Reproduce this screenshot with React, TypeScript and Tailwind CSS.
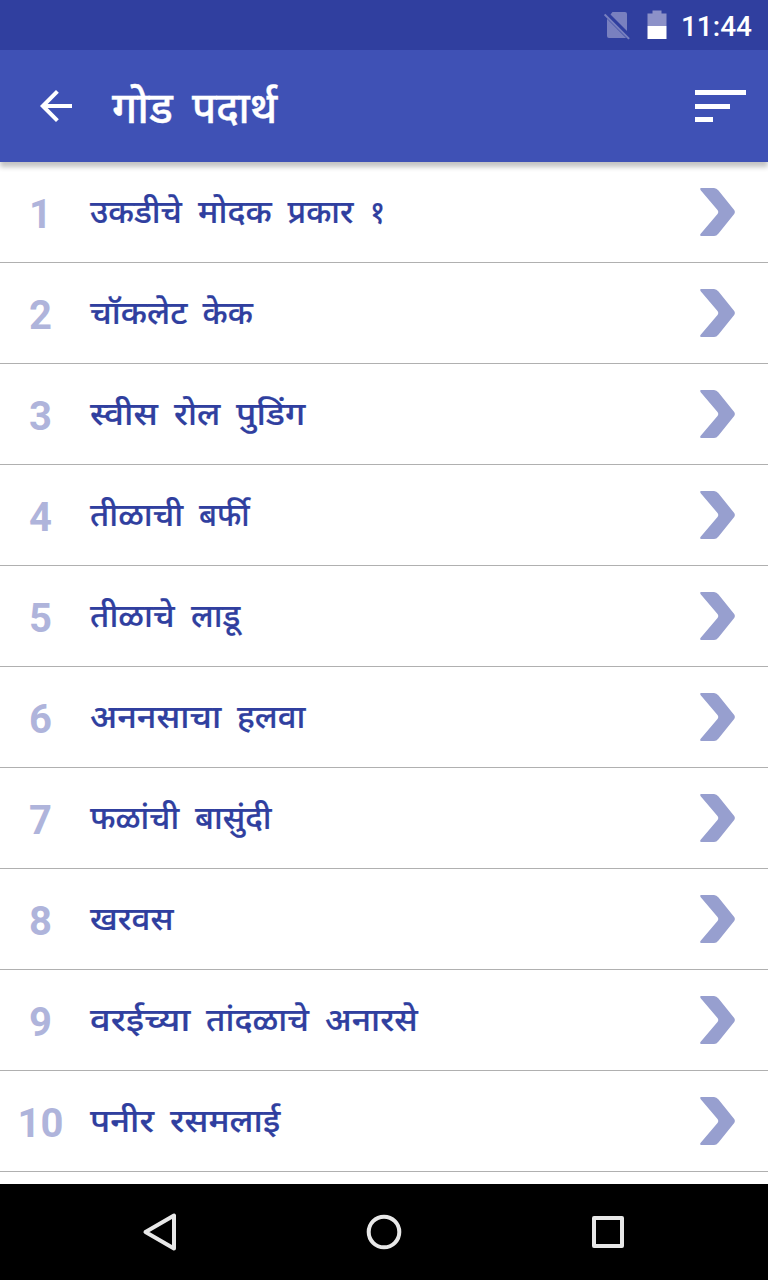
import { useLayoutEffect, useRef } from "react";

type WordData = [text: string, width: number];

const title: WordData[] = [["गोड", 61], ["पदार्थ", 85]];

const recipes: WordData[][] = [
  [["उकडीचे", 92], ["मोदक", 74], ["प्रकार", 66], ["१", 15]],
  [["चॉकलेट", 97], ["केक", 50]],
  [["स्वीस", 68], ["रोल", 46], ["पुडिंग", 69]],
  [["तीळाची", 93], ["बर्फी", 51]],
  [["तीळाचे", 85], ["लाडू", 49]],
  [["अननसाचा", 131], ["हलवा", 68]],
  [["फळांची", 89], ["बासुंदी", 76]],
  [["खरवस", 84]],
  [["वरईच्या", 100], ["तांदळाचे", 103], ["अनारसे", 93]],
  [["पनीर", 64], ["रसमलाई", 110]],
];

/** A word stretched to the advance width of the app's typeface. */
function Word({ text, width }: { text: string; width: number }) {
  const ref = useRef<HTMLSpanElement>(null);
  useLayoutEffect(() => {
    const el = ref.current;
    if (el) el.style.transform = `scaleX(${width / el.offsetWidth})`;
  }, [width]);
  return (
    <span className="block shrink-0" style={{ width }}>
      <span ref={ref} className="block w-max origin-left whitespace-nowrap">{text}</span>
    </span>
  );
}

function StatusBar() {
  return (
    <header className="flex h-[50px] items-center justify-end bg-[#303f9f] pr-4 text-white">
      <svg className="mr-[15px] h-[30px] w-[28px]" viewBox="0 0 28 30">
        <path d="M8.5 2H21a2 2 0 0 1 2 2V21L6.5 4.5ZM3 7.5 23 27.5a2 2 0 0 1-1 .5H5a2 2 0 0 1-2-2Z" fill="#7980bf" />
        <path d="M1 4 25.5 28.5" stroke="#303f9f" strokeWidth="4" />
        <path d="M.6 4.4 25.1 28.9" stroke="#7980bf" strokeWidth="2" />
      </svg>
      <svg className="mr-3.5 h-[30px] w-[20px]" viewBox="0 0 20 30">
        <path d="M0.5 3.5h5V0.5h9v3h5V16H.5Z" fill="#8c91c8" />
        <path d="M.5 16h19v13H.5Z" fill="#fff" />
      </svg>
      <span className="pt-[3px] font-['Roboto',sans-serif] text-[28px] leading-none font-medium">11:44</span>
    </header>
  );
}

function AppBar() {
  return (
    <div className="relative z-10 flex h-28 items-center bg-[#3f51b5] text-white shadow-[0_5px_5px_0_rgba(0,0,0,0.24)]">
      <button className="ml-10 h-8 w-8">
        <svg viewBox="0 0 32 32" className="h-8 w-8" fill="none" stroke="#fff" strokeWidth="4">
          <path d="M32 16H4M17.4 1.4 2.8 16l14.6 14.6" />
        </svg>
      </button>
      <h1 className="ml-10 flex gap-[19px] pt-3.5 font-['Noto_Sans_Devanagari','Noto_Sans',sans-serif] text-[43px] leading-[60px] font-medium [-webkit-text-stroke:0.4px_white]">
        {title.map(([text, width]) => <Word key={text} text={text} width={width} />)}
      </h1>
      <button className="mr-[22px] ml-auto flex h-8 w-[52px] flex-col justify-between pl-px">
        <span className="h-[5px] w-[51px] bg-white" />
        <span className="h-[5px] w-[35px] bg-white" />
        <span className="h-[5px] w-[18px] bg-white" />
      </button>
    </div>
  );
}

function Row({ index, words }: { index: number; words: WordData[] }) {
  return (
    <li className="flex h-[101px] shrink-0 items-center border-b border-[#b0b0b0]">
      <span className="w-20 pt-1.5 pl-px text-center font-['Roboto',sans-serif] text-[40px] leading-none font-bold text-[#afb4db]">{index}</span>
      <span className="ml-[9.5px] flex gap-4 pt-1.5 font-['Noto_Sans_Devanagari','Noto_Sans',sans-serif] text-[32px] leading-[48px] font-medium text-[#303f9f] [-webkit-text-stroke:0.2px_#303f9f]">
        {words.map(([text, width]) => <Word key={text} text={text} width={width} />)}
      </span>
      <svg className="mr-8 ml-auto h-12 w-9" viewBox="0 0 36 48">
        <path d="M1.5 0H14Q16.5 0 18.5 2.5L34.2 22Q35.5 24 34.2 26L18.5 45.5Q16.5 48 14 48H1.5Q-.8 48 .7 45.8L17.5 26Q19 24 17.5 22L.7 2.2Q-.8 0 1.5 0Z" fill="#979fcf" />
      </svg>
    </li>
  );
}

function NavigationBar() {
  return (
    <nav className="flex h-24 items-center justify-center gap-[184px] bg-black">
      <svg className="h-10 w-10" viewBox="0 0 40 40" fill="none" stroke="#e8e8e8" strokeWidth="4" strokeLinejoin="round">
        <path d="M34 3.5v33L5.5 20Z" />
      </svg>
      <svg className="h-10 w-10" viewBox="0 0 40 40" fill="none" stroke="#e8e8e8" strokeWidth="4">
        <circle cx="20" cy="20" r="15.3" />
      </svg>
      <svg className="h-10 w-10" viewBox="0 0 40 40" fill="none" stroke="#e8e8e8" strokeWidth="4" strokeLinejoin="round">
        <path d="M6 6h28v28H6Z" />
      </svg>
    </nav>
  );
}

export default function App() {
  return (
    <div className="flex h-[1280px] w-[768px] flex-col overflow-hidden bg-white">
      <StatusBar />
      <AppBar />
      <ul className="flex min-h-0 flex-1 flex-col overflow-hidden bg-white">
        {recipes.map((words, i) => <Row key={i} index={i + 1} words={words} />)}
      </ul>
      <NavigationBar />
    </div>
  );
}
